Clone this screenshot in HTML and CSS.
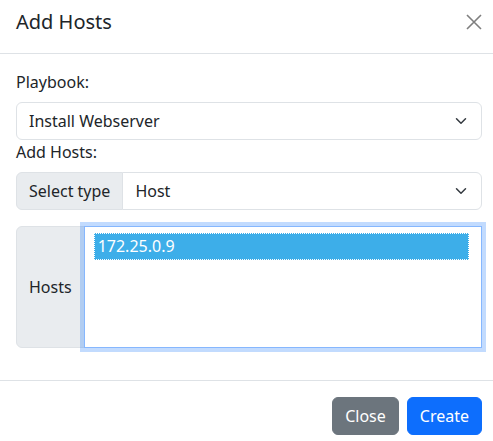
FILE: index.html
```html
<!DOCTYPE html>
<html lang="en">
<head>
<meta charset="utf-8">
<title>Add Hosts</title>
<link rel="stylesheet" href="styles.css">
</head>
<body>
<div class="modal">
  <div class="modal-header">
    <h5 class="modal-title">Add Hosts</h5>
    <button class="btn-close" type="button" aria-label="Close">
      <svg viewBox="0 0 16 16" width="16" height="16"><path d="M1 1L15 15M15 1L1 15" stroke="#7f7f7f" stroke-width="1.6" fill="none"/></svg>
    </button>
  </div>
  <div class="modal-body">
    <label class="form-label">Playbook:</label>
    <div class="form-select">
      <span>Install Webserver</span>
      <svg class="chev" viewBox="0 0 16 16" width="16" height="12"><path d="M2 5l6 6 6-6" stroke="#343a40" stroke-width="2" fill="none" stroke-linecap="round" stroke-linejoin="round"/></svg>
    </div>
    <label class="form-label tight">Add Hosts:</label>
    <div class="input-group mb">
      <span class="addon">Select type</span>
      <div class="form-select grow">
        <span>Host</span>
        <svg class="chev" viewBox="0 0 16 16" width="16" height="12"><path d="M2 5l6 6 6-6" stroke="#343a40" stroke-width="2" fill="none" stroke-linecap="round" stroke-linejoin="round"/></svg>
      </div>
    </div>
    <div class="input-group hosts mb">
      <span class="addon addon-tall">Hosts</span>
      <div class="multi">
        <div class="option selected">172.25.0.9</div>
      </div>
    </div>
  </div>
  <div class="modal-footer">
    <button class="btn btn-secondary" type="button">Close</button>
    <button class="btn btn-primary" type="button">Create</button>
  </div>
</div>
</body>
</html>
```

FILE: styles.css
```css
* { box-sizing: border-box; }
html, body { margin: 0; padding: 0; background: #fff; }
body {
  font-family: "Noto Sans", "Open Sans", sans-serif;
  font-size: 16px;
  line-height: 24px;
  color: #212529;
}
.modal { width: 493px; }
.modal-header {
  display: flex;
  align-items: center;
  padding: 7px 11px 16px 16px;
  border-bottom: 1px solid #dee2e6;
}
.modal-title {
  margin: 0;
  font-size: 20px;
  line-height: 30px;
  font-weight: 400;
  flex: 1;
}
.btn-close {
  border: 0;
  background: none;
  padding: 0;
  width: 16px;
  height: 16px;
  display: flex;
}
.modal-body {
  padding: 16px 11px 16px 16px;
}
.form-label { display: block; margin-bottom: 8px; }
.form-label.tight { margin-bottom: 8px; }
.form-select {
  display: flex;
  align-items: center;
  justify-content: space-between;
  height: 38px;
  padding: 6px 12px;
  border: 1px solid #dee2e6;
  border-radius: 6px;
  background: #fff;
}
.input-group { display: flex; }
.mb { margin-bottom: 16px; }
.addon {
  display: flex;
  align-items: center;
  padding: 6px 12px;
  background: #e9ecef;
  border: 1px solid #dee2e6;
  border-radius: 6px 0 0 6px;
  white-space: nowrap;
}
.input-group .form-select.grow {
  flex: 1;
  border-radius: 0 6px 6px 0;
  margin-left: -1px;
}
.hosts { height: 122px; }
.multi {
  flex: 1;
  margin-left: -1px;
  border: 1px solid #86b7fe;
  border-radius: 0;
  box-shadow: 0 0 0 4px rgba(13, 110, 253, 0.25);
  padding: 6px 12px 6px 9px;
  background: #fff;
}
.option {
  height: 27px;
  line-height: 27px;
  padding-left: 4px;
  color: #fff;
}
.option.selected {
  background: #3daee9;
  outline: 1px dotted #ffffff;
  outline-offset: -1px;
}
.modal-footer {
  display: flex;
  justify-content: flex-end;
  gap: 8px;
  padding: 16px 11px 16px 16px;
  border-top: 1px solid #dee2e6;
}
.btn {
  font-family: inherit;
  font-size: 16px;
  line-height: 24px;
  height: 38px;
  padding: 6px 12px;
  border: 1px solid transparent;
  border-radius: 6px;
  color: #fff;
}
.btn-secondary { background: #6c757d; border-color: #6c757d; }
.btn-primary { background: #0d6efd; border-color: #0d6efd; }
```
